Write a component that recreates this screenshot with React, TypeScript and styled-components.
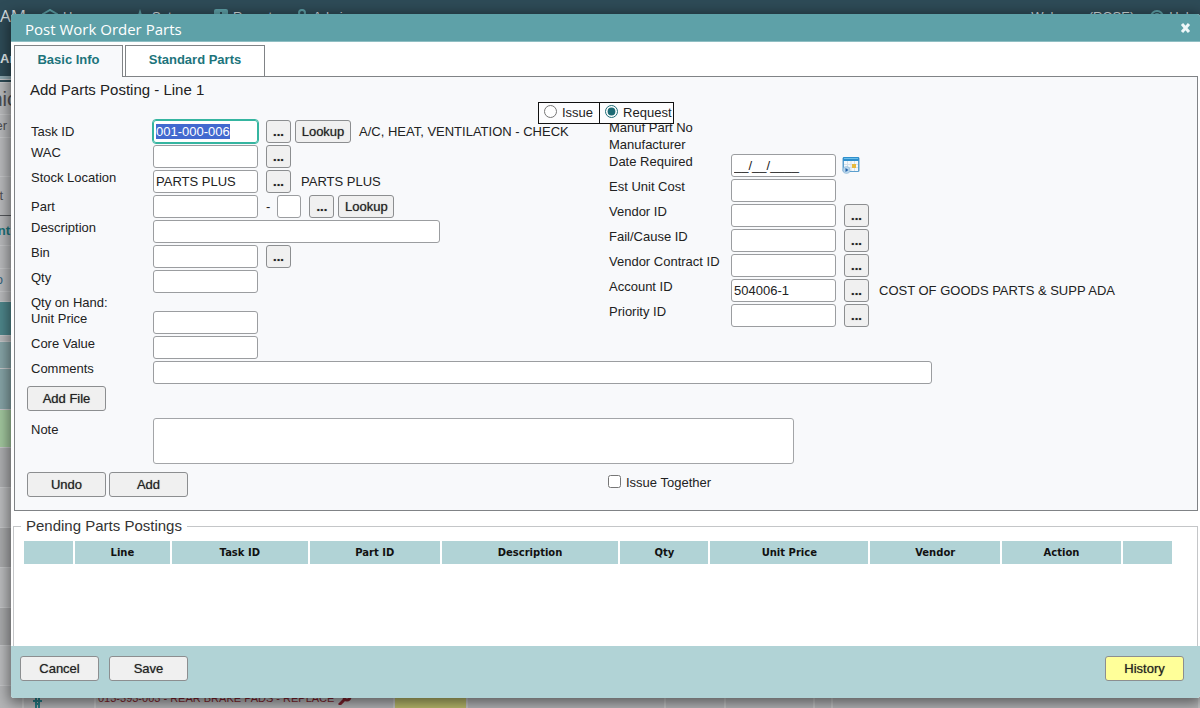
import React, { useEffect, useRef } from "react";
import styled, { createGlobalStyle } from "styled-components";

const GlobalStyle = createGlobalStyle`
  * { box-sizing: border-box; }
  body {
    margin: 0;
    font-family: "Liberation Sans", Arial, sans-serif;
    font-size: 13px;
    line-height: 16px;
    color: #222;
    background: #b9babc;
  }
  button, input, textarea { font: inherit; color: inherit; }
`;

/* ---------- page behind the dialog ---------- */

const Page = styled.div`
  position: relative;
  overflow: hidden;
  min-height: 100vh;
`;

const TopBar = styled.header`
  display: flex;
  align-items: flex-start;
  height: 46px;
  padding: 7px 4px 0 0;
  background: #2e4b57;
  color: #d5dee1;
`;

const Brand = styled.span`
  width: 42px;
  font: 17px/18px "Open Sans", sans-serif;
`;

const NavLinks = styled.nav`
  display: grid;
  grid-template-columns: 90px 82px 82px 82px;
  flex: 1;
`;

const NavLink = styled.a`
  display: flex;
  align-items: center;
  gap: 5px;
  height: 20px;
  color: inherit;
  text-decoration: none;
  svg { flex: none; }
`;

const UserArea = styled.div`
  display: flex;
  gap: 16px;
`;

const SubBar = styled.div`
  height: 30px;
  padding-top: 5px;
  background: #2e4b57;
  color: #e4ebed;
  font-weight: bold;
`;

const Band = styled.div<{ $h: number; $bg?: string }>`
  height: ${(p) => p.$h}px;
  background: ${(p) => p.$bg || "#b9babc"};
  border-bottom: 1px solid #c6c7c9;
  overflow: hidden;
`;

const HeavyBand = styled(Band)`
  border-bottom-color: #55585c;
`;

const Clip = styled.div<{ $end: number; $size?: number; $color?: string; $bold?: boolean }>`
  display: flex;
  justify-content: flex-end;
  width: ${(p) => p.$end}px;
  height: 100%;
  align-items: center;
  white-space: nowrap;
  font-size: ${(p) => p.$size || 13}px;
  font-weight: ${(p) => (p.$bold ? "bold" : "normal")};
  color: ${(p) => p.$color || "#4d4f52"};
`;

const TaskRow = styled.div`
  display: flex;
  height: 26px;
  background: #b4b5b7;
`;

const TaskCell = styled.div<{ $w?: number; $bg?: string }>`
  flex: ${(p) => (p.$w ? `0 0 ${p.$w}px` : "1")};
  display: flex;
  align-items: center;
  gap: 4px;
  padding: 0 2px 2px;
  background: ${(p) => p.$bg || "transparent"};
  border-right: 2px solid #c3c4c5;
  color: #7d1f2b;
  font-size: 11px;
  white-space: nowrap;
`;

/* ---------- dialog ---------- */

const Dialog = styled.section`
  position: absolute;
  inset: 14px 0 auto 11px;
  display: flex;
  flex-direction: column;
  background: #fff;
  border-radius: 3px;
  box-shadow: 0 3px 14px 2px rgba(0, 0, 0, 0.5);
  overflow: hidden;
`;

const DialogHeader = styled.header`
  display: flex;
  align-items: center;
  justify-content: space-between;
  height: 28px;
  padding: 2px 8px 0 14px;
  background: #5ea1a8;
  border-bottom: 1px solid #8fbec3;
`;

const DialogTitle = styled.h1`
  margin: 0;
  font: 15px/20px "Open Sans", sans-serif;
  color: #fff;
`;

const CloseButton = styled.button`
  display: flex;
  padding: 0 0 2px;
  border: 0;
  background: none;
  color: #eef7f8;
`;

const Body = styled.div`
  display: flex;
  flex-direction: column;
  padding: 3px 2px 0;
`;

const Tabs = styled.div`
  display: flex;
  gap: 2px;
  padding-left: 1px;
`;

const Tab = styled.button<{ $active?: boolean; $w: number }>`
  position: relative;
  z-index: 1;
  display: flex;
  justify-content: center;
  width: ${(p) => p.$w}px;
  height: ${(p) => (p.$active ? 32 : 31)}px;
  margin-bottom: ${(p) => (p.$active ? -1 : 0)}px;
  padding: 6px 0 0;
  border: 1px solid #808386;
  border-bottom: 0;
  background: ${(p) => (p.$active ? "#f8f9fb" : "#fff")};
  color: #1c747b;
  font-weight: bold;
`;

const Panel = styled.form`
  position: relative;
  display: flex;
  flex-direction: column;
  margin-left: 1px;
  padding: 5px 12px 13px;
  border: 1px solid #808386;
  background: #f8f9fb;
`;

const PanelTitle = styled.h2`
  margin: 0 0 0 3px;
  height: 38px;
  font-size: 15px;
  line-height: 16px;
  font-weight: normal;
`;

const ModeSwitch = styled.div`
  position: absolute;
  top: 25px;
  left: 523px;
  display: flex;
  border: 1px solid #111;
  background: #fdfdfe;
`;

const Mode = styled.label`
  display: flex;
  align-items: center;
  gap: 5px;
  height: 20px;
  padding: 0 6px 0 5px;
  & + & { border-left: 1px solid #111; padding-right: 1px; }
  input { width: 13px; height: 13px; margin: 0 0 3px; accent-color: #1d6a74; }
`;

const Columns = styled.div`
  display: flex;
`;

const LeftColumn = styled.div`
  flex: 0 0 579px;
  padding-left: 4px;
`;

const RightColumn = styled.div`
  flex: 1;
  padding-left: 3px;
`;

const Field = styled.div<{ $textOnly?: number; $tall?: boolean }>`
  display: flex;
  align-items: flex-start;
  height: ${(p) => p.$textOnly || (p.$tall ? 54 : 25)}px;
`;

const Caption = styled.label<{ $middle?: boolean }>`
  flex: none;
  width: 122px;
  padding-top: ${(p) => (p.$middle ? 4 : 0)}px;
`;

const TextBox = styled.input<{ $w?: number }>`
  width: ${(p) => p.$w || 105}px;
  height: 23px;
  padding: 0 2px;
  border: 1px solid #9b9da0;
  border-radius: 3px;
  background: #fff;
  &:focus { outline: 1px solid #35b5a0; border-color: #35b5a0; }
  &::selection { background: #4269cf; color: #fff; }
`;

const SuffixBox = styled(TextBox)`
  margin-left: 7px;
`;

const NoteBox = styled.textarea`
  width: 641px;
  height: 46px;
  border: 1px solid #a3a5a8;
  border-radius: 3px;
  background: #fff;
  resize: none;
`;

const Button = styled.button<{ $yellow?: boolean }>`
  width: 79px;
  height: 25px;
  padding: 0;
  border: 1px solid #8c8e90;
  border-radius: 3px;
  background: ${(p) => (p.$yellow ? "#ffff99" : "#f0f0f0")};
  text-shadow: 0 0 1px rgba(0, 0, 0, 0.5);
`;

const MoreButton = styled(Button)`
  width: 25px;
  height: 23px;
  margin-left: 8px;
  font-weight: bold;
`;

const LookupButton = styled(Button)`
  width: 56px;
  height: 23px;
  margin-left: 4px;
`;

const Value = styled.span<{ $gap?: number }>`
  margin-left: ${(p) => p.$gap || 8}px;
  padding-top: 4px;
  white-space: nowrap;
`;

const PickerButton = styled.button`
  display: flex;
  margin: 2px 0 0 6px;
  padding: 0;
  border: 0;
  background: none;
`;

const Wide = styled.div`
  padding-left: 4px;
`;

const AddFileRow = styled.div`
  display: flex;
  height: 32px;
`;

const ActionRow = styled.div`
  display: flex;
  gap: 3px;
`;

const Together = styled.label`
  display: flex;
  gap: 5px;
  margin-left: 417px;
  padding-top: 3px;
  input { width: 13px; height: 13px; margin: 0; }
`;

const Pending = styled.fieldset`
  min-width: 0;
  height: 129px;
  margin: 6px 0 0;
  padding: 4px 23px 0 8px;
  border: 1px solid #c4c6c8;
  border-bottom: 0;
  legend { margin-left: -1px; padding: 0 5px; font-size: 15px; line-height: 18px; color: #333; }
`;

const PostingsTable = styled.table`
  width: 100%;
  table-layout: fixed;
  border-spacing: 2px;
  th {
    height: 23px;
    padding: 0;
    background: #b1d3d6;
    font: bold 10px/12px "DejaVu Sans", sans-serif;
    color: #111;
  }
`;

const DialogFooter = styled.footer`
  display: flex;
  gap: 10px;
  height: 52px;
  padding: 10px 16px 0 9px;
  background: #b1d3d6;
`;

const PushRight = styled.div`
  margin-left: auto;
`;

const columns: [string, number][] = [
  ["", 49], ["Line", 95], ["Task ID", 136], ["Part ID", 130], ["Description", 177],
  ["Qty", 88], ["Unit Price", 158], ["Vendor", 130], ["Action", 119], ["", 49],
];
const columnTotal = columns.reduce((sum, c) => sum + c[1], 0);

function More({ label }: { label: string }) {
  return <MoreButton type="button" aria-label={`Browse ${label}`}>...</MoreButton>;
}

function Row(props: {
  id: string; label: string; value?: string; width?: number; middle?: boolean; more?: boolean; children?: React.ReactNode;
}) {
  return (
    <Field>
      <Caption htmlFor={props.id} $middle={props.middle}>{props.label}</Caption>
      <TextBox id={props.id} $w={props.width} defaultValue={props.value} />
      {props.more && <More label={props.label} />}
      {props.children}
    </Field>
  );
}

function CalendarIcon() {
  return (
    <svg width="18" height="18" viewBox="0 0 18 18">
      <rect x="0.5" y="1" width="17" height="15" rx="1.5" fill="#5c9fce" />
      <rect x="1" y="1" width="16" height="4" rx="1" fill="#2f8fcc" />
      <rect x="2" y="2" width="14" height="1" fill="#6cc0ea" />
      <rect x="2" y="5" width="14" height="10" fill="#f4f8fb" />
      <path d="M2 8.500h14M2 11.500h14M5.500 5v10M9 5v10M12.500 5v10" stroke="#d5e0e8" fill="none" />
      <rect x="10" y="8" width="4" height="4" fill="#e6b93c" />
      <circle cx="4.500" cy="14" r="3.500" fill="#b9d6ec" stroke="#8fb8d6" strokeWidth="0.6" />
      <path d="M3.500 12l3 2-3 2z" fill="#1f5fa8" />
    </svg>
  );
}

function Backdrop() {
  return (
    <div aria-hidden="true">
      <TopBar>
        <Brand>AM</Brand>
        <NavLinks>
          <NavLink href="#home">
            <svg width="16" height="16" viewBox="0 0 16 16" fill="none" stroke="#5ea1a8" strokeWidth="2"><path d="M1 5l7-4 7 4v10H1z" /></svg>
            Home
          </NavLink>
          <NavLink href="#setup">
            <svg width="15" height="16" viewBox="0 0 15 16" fill="#5ea1a8"><path d="M8 0l2 6h5l-4 4 2 6-5-4-5 4 2-6-4-4h5z" /></svg>
            Setup
          </NavLink>
          <NavLink href="#reports">
            <svg width="14" height="16" viewBox="0 0 14 16"><rect width="14" height="16" rx="2" fill="#5ea1a8" /><path d="M7 3v10" stroke="#2e4b57" strokeWidth="2" /></svg>
            Reports
          </NavLink>
          <NavLink href="#admin">
            <svg width="12" height="16" viewBox="0 0 12 16" fill="none" stroke="#5ea1a8" strokeWidth="2"><circle cx="6" cy="4" r="3" /><path d="M1 16v-4l5-4 5 4v4" /></svg>
            Admin
          </NavLink>
        </NavLinks>
        <UserArea>
          <NavLink href="#user">Welcome (ROSE)</NavLink>
          <NavLink href="#help">
            <svg width="14" height="16" viewBox="0 0 14 16" fill="none" stroke="#5ea1a8" strokeWidth="2"><circle cx="7" cy="8" r="6" /><path d="M5 7q0-2 2-2t2 2l-2 2" /></svg>
            Help
          </NavLink>
        </UserArea>
      </TopBar>
      <SubBar>Ar</SubBar>
      <Band $h={4} $bg="#8fa9b1" />
      <Band $h={3} $bg="#2e4b57" />
      <Band $h={32}><Clip $end={17} $size={20}>nic</Clip></Band>
      <Band $h={23}><Clip $end={7}>er</Clip></Band>
      <Band $h={39} />
      <HeavyBand $h={39}><Clip $end={3}>t</Clip></HeavyBand>
      <Band $h={30}><Clip $end={10} $color="#1c747b" $bold>nt</Clip></Band>
      <Band $h={23} />
      <Band $h={23}><Clip $end={3} $color="#35627d">o</Clip></Band>
      <Band $h={10} />
      <Band $h={34} $bg="#4e868b" />
      <Band $h={6} />
      <Band $h={27} $bg="#86a4a7" />
      <Band $h={41} $bg="#86a4a7" />
      <Band $h={38} $bg="#a2c79e" />
      <Band $h={40} $bg="#adaeb0" />
      <Band $h={40} $bg="#bbbcbe" />
      <Band $h={40} $bg="#a9aaac" />
      <Band $h={40} $bg="#bbbcbe" />
      <Band $h={38} $bg="#a9aaac" />
      <Band $h={40} $bg="#bbbcbe" />
      <TaskRow>
        <TaskCell $w={24} />
        <TaskCell $w={72}>
          <svg width="24" height="24" viewBox="0 0 24 24" fill="none" stroke="#267d86" strokeWidth="2"><path d="M7 15h9M9 18h5M10 12v11M13 12v11" /></svg>
        </TaskCell>
        <TaskCell $w={299}>
          013-393-003 - REAR BRAKE PADS - REPLACE
          <svg width="14" height="14" viewBox="0 0 14 14" fill="none" stroke="#7d1f2b" strokeWidth="3"><path d="M1 14l6-6" /><circle cx="9" cy="6" r="3" /></svg>
        </TaskCell>
        <TaskCell $w={73} $bg="#b9ba6c" />
        <TaskCell $w={198} />
        <TaskCell $w={60} />
        <TaskCell $w={89} />
        <TaskCell $w={18} />
        <TaskCell />
      </TaskRow>
    </div>
  );
}

export default function App() {
  const taskId = useRef<HTMLInputElement>(null);
  useEffect(() => {
    taskId.current?.focus();
    taskId.current?.select();
  }, []);

  return (
    <Page>
      <GlobalStyle />
      <Backdrop />
      <Dialog role="dialog" aria-labelledby="dialog-title">
        <DialogHeader>
          <DialogTitle id="dialog-title">Post Work Order Parts</DialogTitle>
          <CloseButton type="button" aria-label="Close">
            <svg width="12" height="14" viewBox="0 0 12 14"><path d="M2 3l7 8m0-8l-7 8" stroke="currentColor" strokeWidth="3" /></svg>
          </CloseButton>
        </DialogHeader>

        <Body>
          <Tabs role="tablist">
            <Tab type="button" role="tab" aria-selected="true" $active $w={109}>Basic Info</Tab>
            <Tab type="button" role="tab" aria-selected="false" $w={140}>Standard Parts</Tab>
          </Tabs>

          <Panel>
            <PanelTitle>Add Parts Posting - Line 1</PanelTitle>

            <Columns>
              <LeftColumn>
                <Field>
                  <Caption htmlFor="task" $middle>Task ID</Caption>
                  <TextBox id="task" ref={taskId} defaultValue="001-000-006" />
                  <More label="Task ID" />
                  <LookupButton type="button">Lookup</LookupButton>
                  <Value>A/C, HEAT, VENTILATION - CHECK</Value>
                </Field>
                <Row id="wac" label="WAC" more />
                <Row id="stock" label="Stock Location" value="PARTS PLUS" more>
                  <Value $gap={10}>PARTS PLUS</Value>
                </Row>
                <Row id="part" label="Part" middle>
                  <Value>-</Value>
                  <SuffixBox aria-label="Part suffix" $w={24} />
                  <More label="Part" />
                  <LookupButton type="button">Lookup</LookupButton>
                </Row>
                <Row id="desc" label="Description" width={287} />
                <Row id="bin" label="Bin" more />
                <Row id="qty" label="Qty" />
                <Field $textOnly={16}>Qty on Hand:</Field>
                <Row id="price" label="Unit Price" />
                <Row id="core" label="Core Value" />
              </LeftColumn>

              <RightColumn>
                <Field $textOnly={17}>Manuf Part No</Field>
                <Field $textOnly={17}>Manufacturer</Field>
                <Row id="date" label="Date Required" value="__/__/____">
                  <PickerButton type="button" aria-label="Pick date"><CalendarIcon /></PickerButton>
                </Row>
                <Row id="cost" label="Est Unit Cost" />
                <Row id="vendor" label="Vendor ID" more />
                <Row id="fail" label="Fail/Cause ID" more />
                <Row id="contract" label="Vendor Contract ID" more />
                <Row id="account" label="Account ID" value="504006-1" more>
                  <Value $gap={10}>COST OF GOODS PARTS &amp; SUPP ADA</Value>
                </Row>
                <Row id="priority" label="Priority ID" more />
              </RightColumn>
            </Columns>

            <Wide>
              <Row id="comments" label="Comments" width={779} />
            </Wide>
            <AddFileRow><Button type="button">Add File</Button></AddFileRow>
            <Wide>
              <Field $tall>
                <Caption htmlFor="note" $middle>Note</Caption>
                <NoteBox id="note" />
              </Field>
            </Wide>
            <ActionRow>
              <Button type="button">Undo</Button>
              <Button type="button">Add</Button>
              <Together><input type="checkbox" />Issue Together</Together>
            </ActionRow>

            <ModeSwitch>
              <Mode><input type="radio" name="mode" />Issue</Mode>
              <Mode><input type="radio" name="mode" defaultChecked />Request</Mode>
            </ModeSwitch>
          </Panel>

          <Pending>
            <legend>Pending Parts Postings</legend>
            <PostingsTable>
              <colgroup>
                {columns.map((c, i) => (
                  <col key={i} style={{ width: `${(c[1] / columnTotal) * 100}%` }} />
                ))}
              </colgroup>
              <thead>
                <tr>{columns.map((c, i) => <th key={i} scope="col">{c[0]}</th>)}</tr>
              </thead>
            </PostingsTable>
          </Pending>
        </Body>

        <DialogFooter>
          <Button type="button">Cancel</Button>
          <Button type="button">Save</Button>
          <PushRight><Button type="button" $yellow>History</Button></PushRight>
        </DialogFooter>
      </Dialog>
    </Page>
  );
}
